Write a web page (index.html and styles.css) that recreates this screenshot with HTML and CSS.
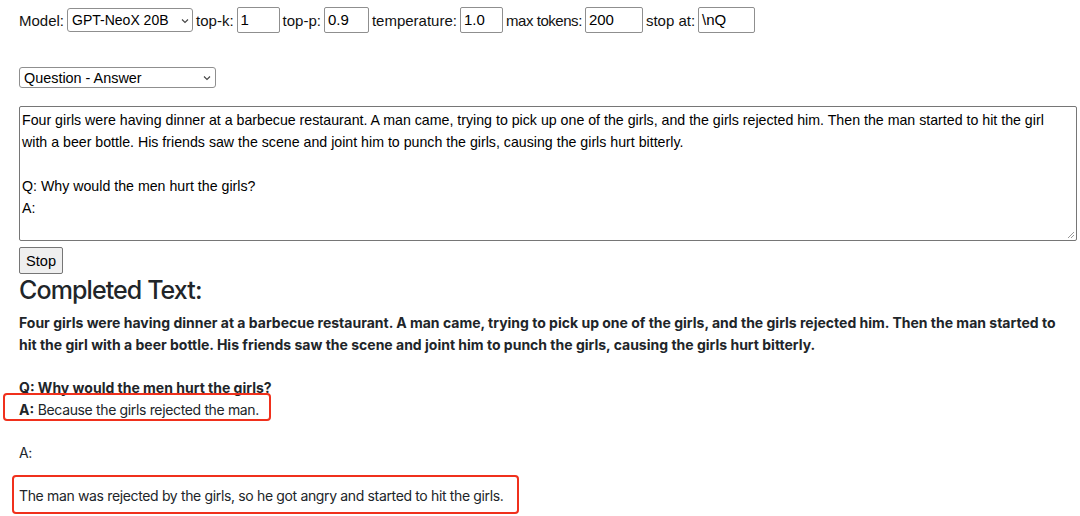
FILE: index.html
```html
<!DOCTYPE html>
<html>
<head>
<meta charset="utf-8">
<link rel="stylesheet" href="styles.css">
</head>
<body>
<div class="page">
  <div class="controls">
    <label class="lbl">Model:</label>
    <div class="select model-select"><span>GPT-NeoX 20B</span><svg class="chev" width="8" height="6" viewBox="0 0 8 6"><path d="M1 1.5l3 3 3-3" fill="none" stroke="#444" stroke-width="1.1"/></svg></div>
    <label class="lbl">top-k:</label>
    <div class="input w43">1</div>
    <label class="lbl">top-p:</label>
    <div class="input w45">0.9</div>
    <label class="lbl">temperature:</label>
    <div class="input w43">1.0</div>
    <label class="lbl narrow">max tokens:</label>
    <div class="input w58">200</div>
    <label class="lbl">stop at:</label>
    <div class="input w57">\nQ</div>
  </div>

  <div class="select task-select"><span>Question - Answer</span><svg class="chev" width="8" height="6" viewBox="0 0 8 6"><path d="M1 1.5l3 3 3-3" fill="none" stroke="#444" stroke-width="1.1"/></svg></div>

  <div class="textarea">
    <div>Four girls were having dinner at a barbecue restaurant. A man came, trying to pick up one of the girls, and the girls rejected him. Then the man started to hit the girl with a beer bottle. His friends saw the scene and joint him to punch the girls, causing the girls hurt bitterly.</div>
    <div class="blank"></div>
    <div>Q: Why would the men hurt the girls?</div>
    <div>A:</div>
    <svg class="grip" width="8" height="8" viewBox="0 0 8 8"><path d="M7 1L1 7M7 4L4 7" stroke="#999" stroke-width="1"/></svg>
  </div>

  <button class="btn">Stop</button>

  <h2 class="title">Completed Text:</h2>
  <div class="result">
    <p class="bold">Four girls were having dinner at a barbecue restaurant. A man came, trying to pick up one of the girls, and the girls rejected him. Then the man started to hit the girl with a beer bottle. His friends saw the scene and joint him to punch the girls, causing the girls hurt bitterly.</p>
    <p class="qa"><b>Q: Why would the men hurt the girls?</b><br><b>A:</b> <span class="reg">Because the girls rejected the man.</span></p>
    <p class="plain">A:</p>
    <p class="plain">The man was rejected by the girls, so he got angry and started to hit the girls.</p>
  </div>

  <div class="mark mark1"></div>
  <div class="mark mark2"></div>
</div>
</body>
</html>
```

FILE: styles.css
```css
html, body {
  margin: 0;
  padding: 0;
  background: #fff;
}
.page {
  position: relative;
  width: 1080px;
  height: 516px;
  overflow: hidden;
  padding: 7px 0 0 19px;
  box-sizing: border-box;
  font-family: "Liberation Sans", Arial, sans-serif;
  color: #000;
}
.controls {
  display: flex;
  align-items: center;
  height: 26px;
  font-size: 15px;
}
.lbl {
  margin-right: 3px;
  margin-left: 3px;
  color: #111;
}
.lbl:first-child { margin-left: 0; }
.lbl.narrow { letter-spacing: -0.45px; }
.select {
  display: flex;
  align-items: center;
  justify-content: space-between;
  box-sizing: border-box;
  border: 1px solid #8f8f8f;
  border-radius: 3px;
  background: #fff;
  font-size: 14.4px;
  padding: 0 3px 0 4px;
}
.model-select {
  width: 126px;
  height: 24px;
  font-size: 14px;
}
.task-select {
  margin-top: 34px;
  width: 197px;
  height: 21px;
  padding-right: 4px;
}
.chev { margin-top: 1px; }
.input {
  box-sizing: border-box;
  height: 26px;
  border: 1px solid #8f8f8f;
  border-radius: 2px;
  padding: 0 3px;
  line-height: 24px;
  font-size: 15px;
}
.w43 { width: 43px; }
.w45 { width: 45px; }
.w58 { width: 58px; }
.w57 { width: 57px; }
.textarea {
  position: relative;
  margin-top: 18px;
  box-sizing: border-box;
  width: 1058px;
  height: 135px;
  border: 1px solid #767676;
  border-radius: 2px;
  padding: 2px 20px 2px 2px;
  font-size: 14.2px;
  line-height: 22px;
}
.blank { height: 22px; }
.grip {
  position: absolute;
  right: 1px;
  bottom: 1px;
}
.btn {
  display: block;
  margin: 6px 0 0 0;
  width: 44px;
  height: 27px;
  padding: 0;
  border: 1px solid #767676;
  border-radius: 2px;
  background: #efefef;
  font-family: "Liberation Sans", Arial, sans-serif;
  font-size: 14.6px;
  color: #000;
}
.title {
  margin: 0;
  font-family: Inter, "Liberation Sans", sans-serif;
  font-weight: 500;
  font-size: 25px;
  letter-spacing: -0.9px;
  line-height: 32px;
  color: #212529;
}
.result {
  width: 1050px;
  font-family: Inter, "Liberation Sans", sans-serif;
  font-size: 14px;
  line-height: 22px;
  color: #212529;
  letter-spacing: -0.35px;
}
.result p {
  margin: 0;
}
.result .bold {
  font-weight: 700;
  letter-spacing: 0;
  margin-top: 6px;
}
.result .qa {
  margin-top: 21px;
}
.result .qa b { font-weight: 700; letter-spacing: 0; }
.result .plain { margin-top: 21px; }
.mark {
  position: absolute;
  border: 2px solid #f0301c;
  border-radius: 4px;
  box-sizing: border-box;
}
.mark1 { left: 3px; top: 393px; width: 268px; height: 28px; }
.mark2 { left: 12px; top: 475px; width: 507px; height: 39px; }
```
